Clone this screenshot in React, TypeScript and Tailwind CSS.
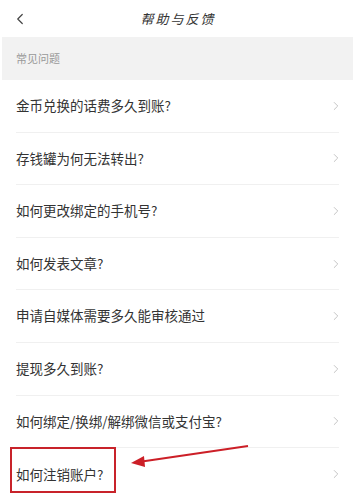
import { ChevronLeft, ChevronRight } from "lucide-react";

const questions = [
  "金币兑换的话费多久到账?",
  "存钱罐为何无法转出?",
  "如何更改绑定的手机号?",
  "如何发表文章?",
  "申请自媒体需要多久能审核通过",
  "提现多久到账?",
  "如何绑定/换绑/解绑微信或支付宝?",
  "如何注销账户?",
];

const App = () => {
  return (
    <div
      className="relative w-[361px] h-[500px] overflow-hidden bg-white"
      style={{ fontFamily: '"Noto Sans CJK SC", "Noto Sans", sans-serif' }}
    >
      {/* header */}
      <div className="relative h-[37px] flex items-center justify-center">
        <ChevronLeft className="absolute left-[11px] top-[10px] h-[18px] w-[18px] text-[#444]" strokeWidth={1.6} />
        <span className="text-[13px] tracking-[2px] text-[#333] mr-[5px] italic">帮助与反馈</span>
      </div>

      {/* section label */}
      <div className="ml-[2px] mr-[8px] h-[43px] bg-[#f2f2f2] flex items-center pl-[14px]">
        <span className="text-[11px] text-[#999]">常见问题</span>
      </div>

      {/* list */}
      <div className="pl-[16px] pr-[22px]">
        {questions.map((q, i) => (
          <div
            key={q}
            className={`h-[52.6px] flex items-center justify-between ${
              i < questions.length - 1 ? "border-b border-[#f0f0f0]" : ""
            }`}
          >
            <span className="text-[13.5px] text-[#333] leading-none">{q}</span>
            <ChevronRight className="h-[14px] w-[14px] text-[#bbb] -mr-[4px]" strokeWidth={1.5} />
          </div>
        ))}
      </div>

      {/* annotation */}
      <div className="absolute left-[10px] top-[447px] w-[106px] h-[46px] border-2 border-[#c8232a]" />
      <svg className="absolute left-0 top-0" width="361" height="500" viewBox="0 0 361 500">
        <line x1="248" y1="446" x2="142" y2="461.5" stroke="#cc1f27" strokeWidth="2" />
        <polygon points="131,463 144,456 145,467" fill="#cc1f27" />
      </svg>
    </div>
  );
};

export default App;
